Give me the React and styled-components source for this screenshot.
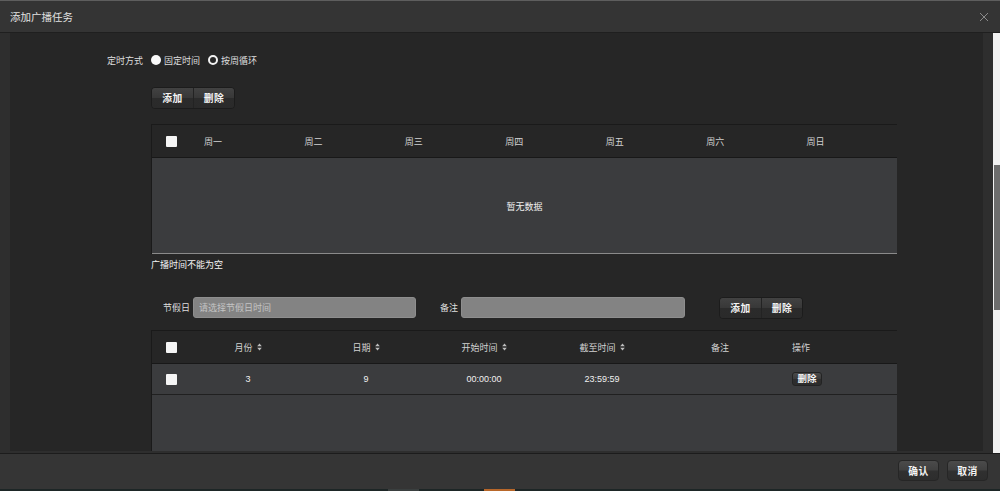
import React from 'react';
import styled, { createGlobalStyle } from 'styled-components';

const Global = createGlobalStyle`
  html, body {
    margin: 0;
    padding: 0;
    background: #1d2626;
  }
  body {
    font-family: "Liberation Sans", "Noto Sans CJK SC", sans-serif;
    color: #e6e6e6;
  }
  * { box-sizing: border-box; }
`;

const Dialog = styled.div`
  width: 1000px;
  height: 491px;
  display: flex;
  flex-direction: column;
  background: #333;
  overflow: hidden;
`;

const Header = styled.div`
  height: 33px;
  flex: none;
  display: flex;
  align-items: center;
  justify-content: space-between;
  padding: 0 10px;
  background: #343434;
  border-top: 1px solid #5e5e5e;
  border-bottom: 1px solid #1f1f1f;
`;

const Title = styled.div`
  font-size: 10.5px;
  color: #e2e2e2;
`;

const Close = styled.button`
  width: 12px;
  height: 12px;
  padding: 0;
  border: 0;
  background: none;
  display: flex;
  align-items: center;
  justify-content: center;
  cursor: pointer;
`;

const Body = styled.div`
  height: 420px;
  flex: none;
  display: flex;
  background: #2e2e2e;
  padding: 0 0 2px 10px;
`;

const ScrollArea = styled.div`
  flex: 1;
  background: #262626;
  overflow: hidden;
  padding-top: 17px;
`;

const Gutter = styled.div`
  width: 10px;
  flex: none;
`;

const Track = styled.div`
  width: 7px;
  flex: none;
  margin-bottom: -2px;
  background: #f2f2f2;
  padding-top: 132px;
  display: flex;
  justify-content: flex-end;
`;

const Thumb = styled.div`
  width: 6px;
  height: 145px;
  background: #6d6d6d;
`;

const TimingRow = styled.div`
  height: 20px;
  display: flex;
  align-items: center;
  padding-left: 97px;
  font-size: 9px;
  color: #dedede;
`;

const Label = styled.span`
  font-size: 9px;
  color: #dedede;
  margin-right: ${(p) => p.$gap || 3}px;
  white-space: nowrap;
`;

const Radio = styled.span`
  width: 10px;
  height: 10px;
  border-radius: 50%;
  flex: none;
  margin-right: 3px;
  background: ${(p) => (p.$checked ? '#fafafa' : '#262626')};
  border: ${(p) => (p.$checked ? '0' : '2px solid #f2f2f2')};
`;

const RadioText = styled.span`
  margin-right: 8px;
`;

const Section = styled.div`
  padding-left: 141px;
  width: 887px;
  margin-top: ${(p) => p.$top || 0}px;
`;

const Group = styled.div`
  display: inline-flex;
  border: 1px solid #1c1c1c;
  border-radius: 4px;
  overflow: hidden;
  box-shadow: inset 0 1px 0 rgba(255, 255, 255, 0.06);
`;

const GroupButton = styled.button`
  width: 41px;
  height: 20px;
  padding: 0;
  border: 0;
  border-left: ${(p) => (p.$first ? '0' : '1px solid #232323')};
  background: linear-gradient(#424242 0%, #383838 48%, #2b2b2b 52%, #2a2a2a 100%);
  color: #f4f4f4;
  font-family: inherit;
  font-size: 9.75px;
  font-weight: bold;
  letter-spacing: 0.5px;
  cursor: pointer;
`;

const SmallButton = styled.button`
  width: 30px;
  height: 14px;
  padding: 0;
  border: 1px solid #232323;
  border-radius: 3px;
  background: linear-gradient(#4a4a4a 0%, #3c3c3c 48%, #2e2e2e 52%, #2c2c2c 100%);
  color: #f4f4f4;
  font-family: inherit;
  font-size: 9.5px;
  font-weight: bold;
  line-height: 12px;
  cursor: pointer;
`;

const FootButton = styled.button`
  width: 41px;
  height: 21px;
  padding: 0;
  border: 1px solid #262626;
  border-radius: 4px;
  background: linear-gradient(#4b4b4b 0%, #404040 48%, #303030 52%, #2d2d2d 100%);
  color: #f4f4f4;
  font-family: inherit;
  font-size: 9.75px;
  font-weight: bold;
  letter-spacing: 0.5px;
  cursor: pointer;
`;

const Table = styled.div`
  width: 746px;
  border-left: 1px solid #1a1a1a;
  border-top: 1px solid #1a1a1a;
`;

const HeadRow = styled.div`
  display: grid;
  grid-template-columns: ${(p) => p.$cols};
  height: 33px;
  align-items: center;
  background: #262626;
  border-bottom: 1px solid #181818;
  font-size: 9px;
  color: #d2d2d2;
`;

const DataRow = styled.div`
  display: grid;
  grid-template-columns: ${(p) => p.$cols};
  height: 31px;
  align-items: center;
  background: #3b3c3e;
  border-bottom: 1px solid #202020;
  font-size: 9px;
  color: #f0f0f0;
`;

const Cell = styled.div`
  display: flex;
  align-items: center;
  justify-content: ${(p) => (p.$center ? 'center' : 'flex-start')};
  padding-left: ${(p) => p.$pad || 0}px;
  gap: 4px;
  white-space: nowrap;
`;

const Check = styled.span`
  width: 11px;
  height: 11px;
  border-radius: 1px;
  background: #f5f5f5;
  display: block;
`;

const Empty = styled.div`
  height: 96px;
  background: #3b3c3e;
  border-bottom: 1px solid #8a8a8a;
  display: flex;
  align-items: center;
  justify-content: center;
  padding-top: 2px;
  font-size: 9px;
  color: #f0f0f0;
`;

const Filler = styled.div`
  height: 80px;
  background: #3b3c3e;
`;

const Error = styled.div`
  margin-top: 4px;
  font-size: 9px;
  line-height: 14px;
  color: #f4f4f4;
`;

const FilterRow = styled.div`
  display: flex;
  align-items: center;
  height: 21px;
  padding-left: 12px;
`;

const Input = styled.input`
  width: ${(p) => p.$w}px;
  height: 21px;
  border: 1px solid #8e8e8e;
  border-radius: 3px;
  background: #838383;
  padding: 0 5px;
  font-family: inherit;
  font-size: 9px;
  color: #eee;
  margin-right: ${(p) => p.$after}px;
  outline: none;
  &::placeholder {
    color: #c4c4c4;
  }
`;

const Footer = styled.div`
  height: 36px;
  flex: none;
  display: flex;
  align-items: center;
  justify-content: flex-end;
  gap: 8px;
  padding: 0 12px 2px 0;
  background: #353535;
  border-top: 1px solid #1c1c1c;
`;

const Strip = styled.div`
  height: 2px;
  flex: none;
  display: flex;
  background: #1d2626;
  padding-left: 388px;
`;

const StripBlock = styled.span`
  width: 31px;
  height: 2px;
  background: ${(p) => p.$c};
  margin-right: ${(p) => p.$after || 0}px;
`;

const SortIcon = () => (
  <svg width="5" height="8" viewBox="0 0 5 8">
    <path d="M2.5 0.5 L4.8 3.2 L0.2 3.2 Z" fill="#bdbdbd" />
    <path d="M2.5 7.5 L4.8 4.8 L0.2 4.8 Z" fill="#bdbdbd" />
  </svg>
);

const weekCols = '42px repeat(7, 1fr)';
const weekDays = ['周一', '周二', '周三', '周四', '周五', '周六', '周日'];
const holidayCols = '37px repeat(5, 118px) 1fr';

const holidays = [{ month: 3, day: 9, start: '00:00:00', end: '23:59:59', note: '' }];

export default function App() {
  return (
    <>
      <Global />
      <Dialog>
        <Header>
          <Title>添加广播任务</Title>
          <Close aria-label="close">
            <svg width="10" height="10" viewBox="0 0 10 10">
              <path d="M1 1 L9 9 M9 1 L1 9" stroke="#8a8a8a" strokeWidth="1" />
            </svg>
          </Close>
        </Header>

        <Body>
          <ScrollArea>
            <TimingRow>
              <Label $gap={8}>定时方式</Label>
              <Radio $checked />
              <RadioText>固定时间</RadioText>
              <Radio />
              <RadioText>按周循环</RadioText>
            </TimingRow>

            <Section $top={17}>
              <Group>
                <GroupButton $first>添加</GroupButton>
                <GroupButton>删除</GroupButton>
              </Group>
            </Section>

            <Section $top={15}>
              <Table>
                <HeadRow $cols={weekCols}>
                  <Cell $pad={14}>
                    <Check />
                  </Cell>
                  {weekDays.map((d) => (
                    <Cell key={d} $pad={10}>
                      {d}
                    </Cell>
                  ))}
                </HeadRow>
                <Empty>暂无数据</Empty>
              </Table>
              <Error>广播时间不能为空</Error>
            </Section>

            <Section $top={25}>
              <FilterRow>
                <Label>节假日</Label>
                <Input $w={223} $after={24} placeholder="请选择节假日时间" />
                <Label>备注</Label>
                <Input $w={224} $after={34} />
                <Group>
                  <GroupButton $first>添加</GroupButton>
                  <GroupButton>删除</GroupButton>
                </Group>
              </FilterRow>
            </Section>

            <Section $top={12}>
              <Table>
                <HeadRow $cols={holidayCols}>
                  <Cell $pad={14}>
                    <Check />
                  </Cell>
                  <Cell $center>
                    月份 <SortIcon />
                  </Cell>
                  <Cell $center>
                    日期 <SortIcon />
                  </Cell>
                  <Cell $center>
                    开始时间 <SortIcon />
                  </Cell>
                  <Cell $center>
                    截至时间 <SortIcon />
                  </Cell>
                  <Cell $center>备注</Cell>
                  <Cell $pad={13}>操作</Cell>
                </HeadRow>
                {holidays.map((h, i) => (
                  <DataRow key={i} $cols={holidayCols}>
                    <Cell $pad={14}>
                      <Check />
                    </Cell>
                    <Cell $center>{h.month}</Cell>
                    <Cell $center>{h.day}</Cell>
                    <Cell $center>{h.start}</Cell>
                    <Cell $center>{h.end}</Cell>
                    <Cell $center>{h.note}</Cell>
                    <Cell $pad={13}>
                      <SmallButton>删除</SmallButton>
                    </Cell>
                  </DataRow>
                ))}
                <Filler />
              </Table>
            </Section>
          </ScrollArea>
          <Gutter />
          <Track>
            <Thumb />
          </Track>
        </Body>

        <Footer>
          <FootButton>确认</FootButton>
          <FootButton>取消</FootButton>
        </Footer>
        <Strip>
          <StripBlock $c="#3a3f3f" $after={65} />
          <StripBlock $c="#b8672a" />
        </Strip>
      </Dialog>
    </>
  );
}
